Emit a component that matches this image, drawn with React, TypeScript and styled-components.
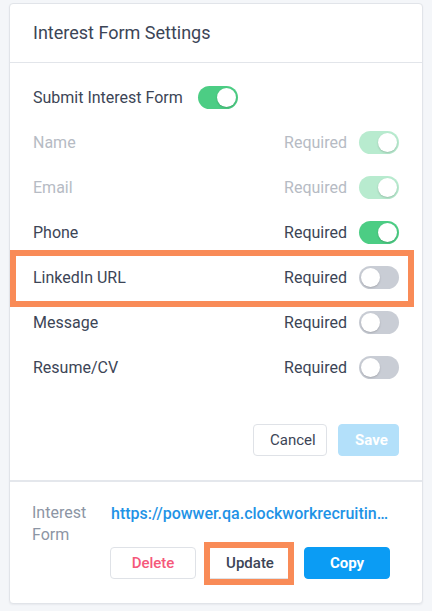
import styled, { createGlobalStyle } from 'styled-components';

const GlobalStyle = createGlobalStyle`
  html, body {
    margin: 0;
    padding: 0;
    background: #f4f6f9;
    font-family: Roboto, "Liberation Sans", Arial, sans-serif;
  }
`;

const Page = styled.div`
  padding: 3px 9px 8px 9px;
`;

const Card = styled.div`
  width: 414px;
  box-sizing: border-box;
  background: #ffffff;
  border: 1px solid #e1e4e9;
  border-radius: 4px;
  box-shadow: 0 1px 2px rgba(30, 40, 60, 0.06);
`;

const CardHeader = styled.div`
  height: 59px;
  display: flex;
  align-items: center;
  padding: 0 23px 2px 23px;
  box-sizing: border-box;
  border-bottom: 1px solid #e2e5ea;
`;

const Title = styled.h2`
  margin: 0;
  font-size: 18px;
  font-weight: 400;
  color: #3c4556;
`;

const CardBody = styled.div`
  padding: 12px 0 24px 0;
  border-bottom: 2px solid #e4e7ec;
`;

const Row = styled.div<{ $muted?: boolean }>`
  position: relative;
  height: 45px;
  display: flex;
  align-items: center;
  padding: 0 23px;
  font-size: 16px;
  font-weight: 400;
  color: ${(p) => (p.$muted ? '#b6bbc4' : '#3c4556')};
`;

const Label = styled.span`
  flex: 1;
`;

const SubmitRow = styled(Row)`
  gap: 15px;
`;

const RequiredText = styled.span`
  margin-right: 12px;
`;

const Toggle = styled.span<{ $on: boolean; $disabled?: boolean }>`
  position: relative;
  width: 40px;
  height: 23px;
  border-radius: 12px;
  flex: none;
  background: ${(p) => (p.$on ? (p.$disabled ? '#b8ebcf' : '#4ccd84') : '#c9cdd5')};

  &::after {
    content: '';
    position: absolute;
    top: 2px;
    left: ${(p) => (p.$on ? '19px' : '2px')};
    width: 19px;
    height: 19px;
    border-radius: 50%;
    background: #ffffff;
    box-shadow: 0 1px 2px rgba(0, 0, 0, 0.18);
  }
`;

const Highlight = styled.span<{ $top: number; $right: number; $bottom: number; $left: number }>`
  position: absolute;
  top: ${(p) => p.$top}px;
  right: ${(p) => p.$right}px;
  bottom: ${(p) => p.$bottom}px;
  left: ${(p) => p.$left}px;
  border: 6px solid #f98b57;
  pointer-events: none;
`;

const Actions = styled.div`
  display: flex;
  justify-content: flex-end;
  gap: 11px;
  padding: 34px 23px 0 0;
`;

const Button = styled.button<{ $variant?: 'default' | 'primary' | 'danger' | 'disabled' }>`
  position: relative;
  height: 32px;
  box-sizing: border-box;
  padding: 0 16px;
  border-radius: 4px;
  font-family: inherit;
  font-size: 15px;
  font-weight: ${(p) => (p.$variant === 'primary' || p.$variant === 'disabled' ? 700 : 400)};
  border: 1px solid
    ${(p) => (p.$variant === 'primary' ? '#0b9cf4' : p.$variant === 'disabled' ? '#b3e0fa' : '#dfe2e7')};
  background: ${(p) =>
    p.$variant === 'primary' ? '#0b9cf4' : p.$variant === 'disabled' ? '#b3e0fa' : '#ffffff'};
  color: ${(p) =>
    p.$variant === 'primary' || p.$variant === 'disabled'
      ? '#ffffff'
      : p.$variant === 'danger'
        ? '#f5587b'
        : '#3c4556'};
`;

const CancelButton = styled(Button)`
  width: 74px;
`;

const SaveButton = styled(Button)`
  width: 61px;
`;

const Footer = styled.div`
  display: flex;
  padding: 20px 23px 24px 22px;
`;

const FooterLabel = styled.div`
  width: 79px;
  flex: none;
  font-size: 16px;
  line-height: 22px;
  color: #8c95a4;
`;

const FooterMain = styled.div`
  flex: 1;
  min-width: 0;
  padding-top: 1px;
`;

const Link = styled.a`
  display: block;
  font-size: 16px;
  font-weight: 500;
  line-height: 22px;
  color: #1f93e6;
  text-decoration: none;
  white-space: nowrap;
`;

const FooterButtons = styled.div`
  display: flex;
  gap: 11px;
  margin-top: 22px;
  margin-left: -1px;
`;

const FooterButton = styled(Button)`
  width: 86px;
  height: 32px;
  font-weight: ${(p) => (p.$variant === 'primary' ? 700 : 500)};
`;

const fields = [
  { name: 'Name', on: true, disabled: true },
  { name: 'Email', on: true, disabled: true },
  { name: 'Phone', on: true },
  { name: 'LinkedIn URL', on: false, highlight: true },
  { name: 'Message', on: false },
  { name: 'Resume/CV', on: false },
];

export default function App() {
  return (
    <Page>
      <GlobalStyle />
      <Card>
        <CardHeader>
          <Title>Interest Form Settings</Title>
        </CardHeader>
        <CardBody>
          <SubmitRow>
            <span>Submit Interest Form</span>
            <Toggle $on />
          </SubmitRow>
          {fields.map((f) => (
            <Row key={f.name} $muted={f.disabled}>
              <Label>{f.name}</Label>
              <RequiredText>Required</RequiredText>
              <Toggle $on={f.on} $disabled={f.disabled} />
              {f.highlight && <Highlight $top={-5} $right={8} $bottom={-7} $left={0} />}
            </Row>
          ))}
          <Actions>
            <CancelButton>Cancel</CancelButton>
            <SaveButton $variant="disabled">Save</SaveButton>
          </Actions>
        </CardBody>
        <Footer>
          <FooterLabel>
            Interest
            <br />
            Form
          </FooterLabel>
          <FooterMain>
            <Link href="#">https://powwer.qa.clockworkrecruitin…</Link>
            <FooterButtons>
              <FooterButton $variant="danger">Delete</FooterButton>
              <FooterButton>
                Update
                <Highlight $top={-6} $right={-2} $bottom={-7} $left={-4} />
              </FooterButton>
              <FooterButton $variant="primary">Copy</FooterButton>
            </FooterButtons>
          </FooterMain>
        </Footer>
      </Card>
    </Page>
  );
}
